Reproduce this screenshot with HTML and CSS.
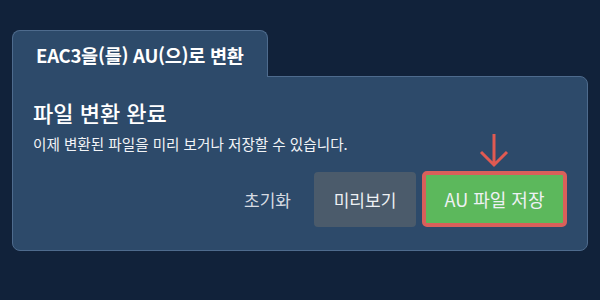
FILE: index.html
```html
<!DOCTYPE html>
<html lang="ko">
  <head>
    <meta charset="UTF-8" />
    <meta name="viewport" content="width=device-width, initial-scale=1.0" />
    <title>EAC3 to AU</title>
    <link rel="stylesheet" href="styles.css">
  </head>
  <body>
    <div class="wrap">
      <div class="tab">EAC3을(를) AU(으)로 변환</div>
      <div class="panel">
        <h2 class="title">파일 변환 완료</h2>
        <p class="desc">이제 변환된 파일을 미리 보거나 저장할 수 있습니다.</p>
        <div class="actions">
          <button class="btn btn-reset">초기화</button>
          <button class="btn btn-preview">미리보기</button>
          <div class="save-box">
            <svg class="arrow" width="30" height="34" viewBox="0 0 30 34">
              <path d="M15 0 V31 M2 18 L15 31 L28 18" fill="none" stroke="#e05a52" stroke-width="3" />
            </svg>
            <button class="btn btn-save">AU 파일 저장</button>
          </div>
        </div>
      </div>
    </div>
  </body>
</html>
```

FILE: styles.css
```css
* {
  margin: 0;
  padding: 0;
  box-sizing: border-box;
}

body {
  background-color: #11223a;
  font-family: "Noto Sans CJK KR", "Noto Sans", sans-serif;
  color: #fff;
}

.wrap {
  padding: 30px 12px 0 12px;
  width: 600px;
}

.tab {
  position: relative;
  z-index: 1;
  width: 256px;
  height: 47px;
  margin-bottom: -1px;
  padding: 10px 0 0 23px;
  background-color: #2d4a6a;
  border: 1px solid #4e6b8d;
  border-bottom: none;
  border-radius: 8px 8px 0 0;
  font-size: 18.6px;
  font-weight: 700;
  letter-spacing: -0.3px;
}

.panel {
  height: 175px;
  padding: 19px 20px 20px 20px;
  background-color: #2d4a6a;
  border: 1px solid #4e6b8d;
  border-radius: 0 8px 8px 8px;
}

.title {
  font-size: 22px;
  font-weight: 500;
  line-height: 32px;
}

.desc {
  margin-top: 6px;
  font-size: 14.6px;
  line-height: 20px;
  color: #f2f4f7;
}

.actions {
  display: flex;
  justify-content: flex-end;
  align-items: center;
  margin-top: 17px;
}

.btn {
  border: none;
  font-family: inherit;
  font-size: 17px;
  color: #eef1f4;
  cursor: pointer;
}

.btn-reset {
  background: none;
  padding: 0 23px 0 0;
  color: #d6dbe2;
}

.btn-preview {
  width: 102px;
  height: 55px;
  background-color: #4b5b6b;
  border-radius: 4px;
}

.save-box {
  position: relative;
  margin-left: 6px;
}

.btn-save {
  display: block;
  width: 145px;
  height: 56px;
  background-color: #5cb85c;
  border: 4px solid #d9605a;
  border-radius: 5px;
  font-size: 18px;
}

.arrow {
  position: absolute;
  left: 57px;
  top: -37px;
}
```
